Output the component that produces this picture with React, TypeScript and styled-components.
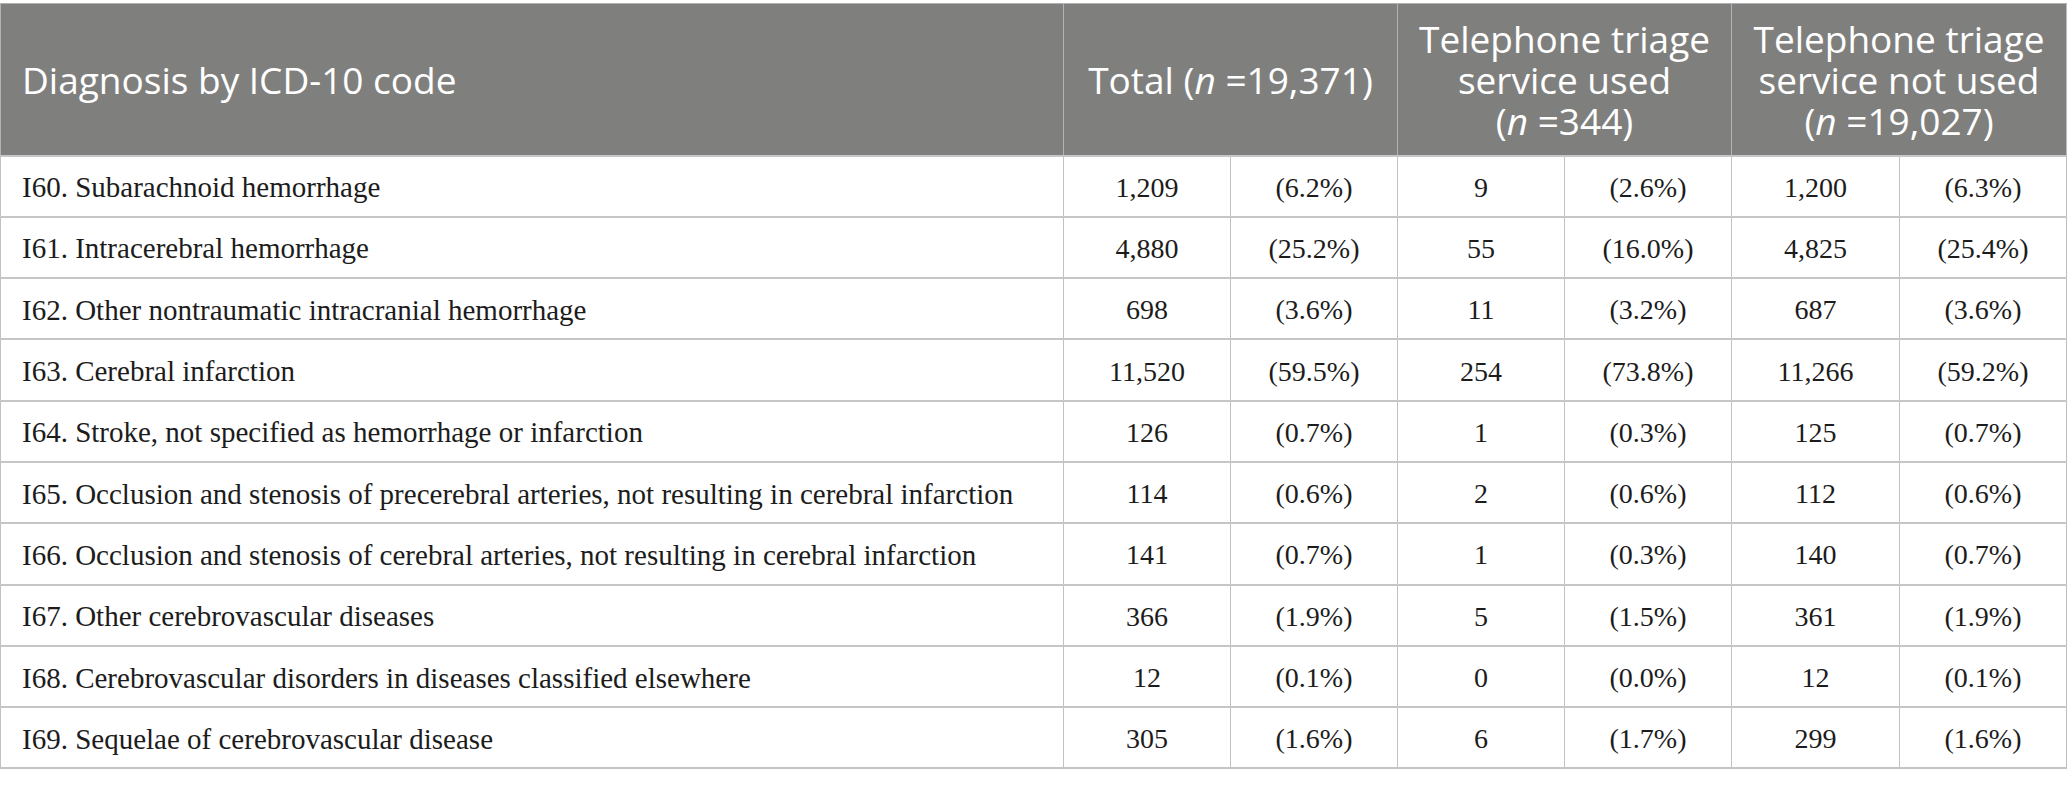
import React from "react";
import styled, { createGlobalStyle } from "styled-components";

const Global = createGlobalStyle`
  html, body { margin: 0; padding: 0; background: #ffffff; }
  #root { width: 2067px; }
`;

const Wrap = styled.div`
  padding-top: 3px;
  width: 2067px;
  box-sizing: border-box;
`;

const Table = styled.table`
  width: 2066px;
  border-collapse: collapse;
  table-layout: fixed;
  border: 1px solid #bdbdbd;
  border-bottom: 2px solid #c4c4c4;
`;

const Col = styled.col<{ $w: number }>`
  width: ${(p) => p.$w}px;
`;

const HeadRow = styled.tr`
  height: 152px;
  background: #7f807e;
`;

const Th = styled.th<{ $align?: "left" | "center" }>`
  color: #ffffff;
  font-family: "Open Sans", "Noto Sans", sans-serif;
  font-weight: 400;
  font-size: 37px;
  line-height: 41px;
  text-align: ${(p) => p.$align ?? "center"};
  vertical-align: middle;
  padding: 0 0 0 ${(p) => (p.$align === "left" ? "21px" : "0")};
  border-left: 1px solid #b3b3b3;
  border-top: 1px solid #b3b3b3;
  white-space: nowrap;
  em { font-style: italic; }
`;

const Row = styled.tr`
  height: 61.3px;
`;

const Td = styled.td<{ $label?: boolean }>`
  font-family: "Liberation Serif", "Times New Roman", serif;
  font-size: ${(p) => (p.$label ? "29px" : "28px")};
  color: #1c1c1c;
  text-align: ${(p) => (p.$label ? "left" : "center")};
  padding: 3px 0 0 ${(p) => (p.$label ? "21px" : "0")};
  vertical-align: middle;
  border-left: 1px solid #c2c2c2;
  border-top: 2px solid #c6c6c6;
  white-space: nowrap;
`;

type R = [string, string, string, string, string, string, string];

const widths = [1063, 167, 167, 167, 167, 168, 167];

const rows: R[] = [
  ["I60. Subarachnoid hemorrhage", "1,209", "(6.2%)", "9", "(2.6%)", "1,200", "(6.3%)"],
  ["I61. Intracerebral hemorrhage", "4,880", "(25.2%)", "55", "(16.0%)", "4,825", "(25.4%)"],
  ["I62. Other nontraumatic intracranial hemorrhage", "698", "(3.6%)", "11", "(3.2%)", "687", "(3.6%)"],
  ["I63. Cerebral infarction", "11,520", "(59.5%)", "254", "(73.8%)", "11,266", "(59.2%)"],
  ["I64. Stroke, not specified as hemorrhage or infarction", "126", "(0.7%)", "1", "(0.3%)", "125", "(0.7%)"],
  ["I65. Occlusion and stenosis of precerebral arteries, not resulting in cerebral infarction", "114", "(0.6%)", "2", "(0.6%)", "112", "(0.6%)"],
  ["I66. Occlusion and stenosis of cerebral arteries, not resulting in cerebral infarction", "141", "(0.7%)", "1", "(0.3%)", "140", "(0.7%)"],
  ["I67. Other cerebrovascular diseases", "366", "(1.9%)", "5", "(1.5%)", "361", "(1.9%)"],
  ["I68. Cerebrovascular disorders in diseases classified elsewhere", "12", "(0.1%)", "0", "(0.0%)", "12", "(0.1%)"],
  ["I69. Sequelae of cerebrovascular disease", "305", "(1.6%)", "6", "(1.7%)", "299", "(1.6%)"],
];

export default function App() {
  return (
    <Wrap>
      <Global />
      <Table>
        <colgroup>
          {widths.map((w, i) => (
            <Col key={i} $w={w} />
          ))}
        </colgroup>
        <thead>
          <HeadRow>
            <Th $align="left">Diagnosis by ICD-10 code</Th>
            <Th colSpan={2}>
              Total (<em>n</em> =19,371)
            </Th>
            <Th colSpan={2}>
              Telephone triage
              <br />
              service used
              <br />(<em>n</em> =344)
            </Th>
            <Th colSpan={2}>
              Telephone triage
              <br />
              service not used
              <br />(<em>n</em> =19,027)
            </Th>
          </HeadRow>
        </thead>
        <tbody>
          {rows.map((r) => (
            <Row key={r[0]}>
              {r.map((c, i) => (
                <Td key={i} $label={i === 0}>
                  {c}
                </Td>
              ))}
            </Row>
          ))}
        </tbody>
      </Table>
    </Wrap>
  );
}
